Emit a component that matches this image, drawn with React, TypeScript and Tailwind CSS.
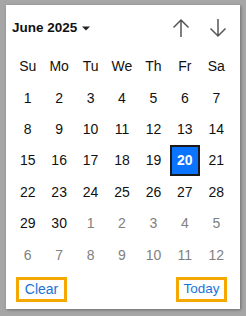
import React from "react";

const weekdays = ["Su", "Mo", "Tu", "We", "Th", "Fr", "Sa"];
const days: { d: number; cur: boolean }[] = [];
for (let i = 1; i <= 30; i++) days.push({ d: i, cur: true });
for (let i = 1; i <= 12; i++) days.push({ d: i, cur: false });

export default function App() {
  return (
    <div className="w-[246px] h-[316px] bg-[#a6a6a6] pt-[5px] pl-[6px]" style={{ fontFamily: '"Liberation Sans", Arial, sans-serif' }}>
      <div className="w-[234px] h-[304px] bg-white shadow-[1px_1px_3px_rgba(0,0,0,0.35)] flex flex-col">
        <div className="h-[46px] flex items-center pl-[6px] pr-[13px]">
          <div className="flex items-center gap-[5px]">
            <span className="text-[13.5px] font-bold text-[#111]">June 2025</span>
            <svg width="8" height="5" viewBox="0 0 8 5"><path d="M0 0.5 L8 0.5 L4 4.5 Z" fill="#222" /></svg>
          </div>
          <div className="ml-auto flex items-center gap-[19px]">
            <svg width="18" height="20" viewBox="0 0 18 20">
              <path d="M9 19 V2 M1.5 9.5 L9 2 L16.5 9.5" stroke="#555" strokeWidth="1.5" fill="none" />
            </svg>
            <svg width="18" height="20" viewBox="0 0 18 20">
              <path d="M9 1 V18 M1.5 10.5 L9 18 L16.5 10.5" stroke="#555" strokeWidth="1.5" fill="none" />
            </svg>
          </div>
        </div>
        <div className="ml-[6px] w-[220px] grid grid-cols-7">
          {weekdays.map((w) => (
            <div key={w} className="h-[31.4px] flex items-center justify-center text-[14px] text-[#111]">{w}</div>
          ))}
          {days.map((x, i) => (
            <div key={i} className="h-[31.4px] flex items-center justify-center text-[14px]">
              {x.cur && x.d === 20 ? (
                <span className="w-[30px] h-[31px] flex items-center justify-center bg-[#0a74ff] border-2 border-[#1a1a1a] text-white font-bold">20</span>
              ) : (
                <span className={x.cur ? "text-[#111]" : "text-[#808080]"}>{x.d}</span>
              )}
            </div>
          ))}
        </div>
        <div className="flex justify-between mt-[6px] pl-[10px] pr-[13px]">
          <span className="h-[25px] w-[51px] flex items-center justify-center border-[3px] border-[#f5a800] text-[14px] text-[#1a73d9]">Clear</span>
          <span className="h-[25px] w-[51px] flex items-center justify-center border-[3px] border-[#f5a800] text-[13.5px] text-[#1a73d9]">Today</span>
        </div>
      </div>
    </div>
  );
}
